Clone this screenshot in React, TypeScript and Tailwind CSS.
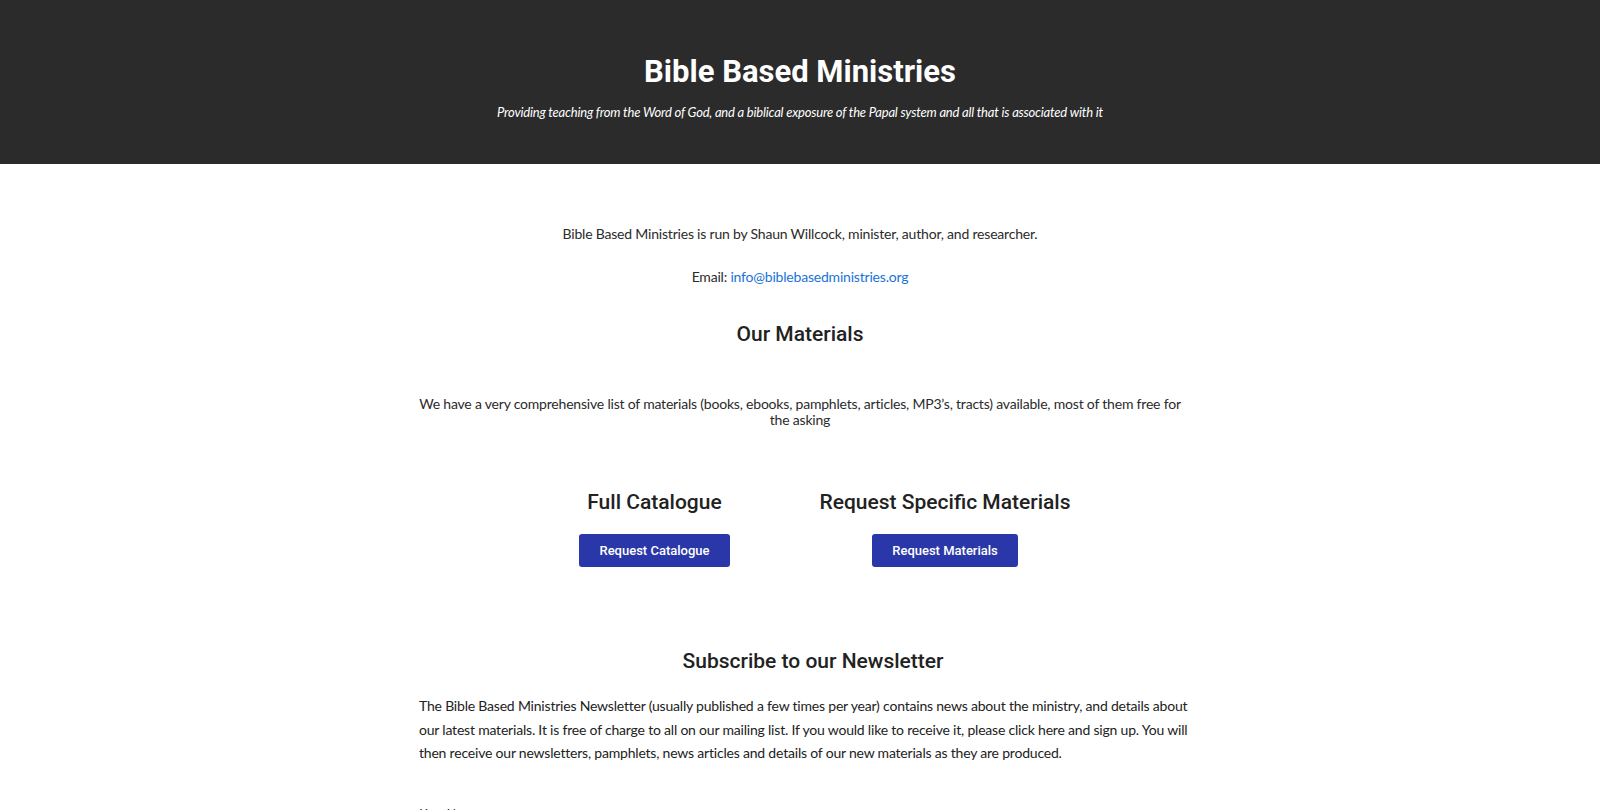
import React from 'react';

export default function App() {
  return (
    <div className="min-h-[810px] bg-white font-['Lato','Liberation_Sans',sans-serif] text-[#2b2b2b]">
      {/* Header */}
      <header className="h-[164px] bg-[#2b2b2b] flex flex-col items-center pt-[52px]">
        <h1 className="font-['Roboto',sans-serif] font-bold text-[31px] leading-[40px] text-white">
          Bible Based Ministries
        </h1>
        <p className="mt-[11px] italic text-[13px] tracking-[-0.2px] leading-[18px] text-white">
          Providing teaching from the Word of God, and a biblical exposure of the Papal system and all that is associated with it
        </p>
      </header>

      <main className="w-[772px] mx-auto flex flex-col items-center">
        <p className="mt-[60px] text-[14px] tracking-[-0.2px] leading-[20px] text-center">
          Bible Based Ministries is run by Shaun Willcock, minister, author, and researcher.
        </p>
        <p className="mt-[23px] text-[14px] tracking-[-0.2px] leading-[20px] text-center">
          Email: <a href="#" className="text-[#1a73d9]">info@biblebasedministries.org</a>
        </p>

        <h2 className="mt-[33px] font-['Roboto',sans-serif] font-medium text-[21px] leading-[28px] text-[#222]">
          Our Materials
        </h2>

        <p className="mt-[48px] w-[764px] text-[14px] tracking-[-0.2px] leading-[16px] text-center">
          We have a very comprehensive list of materials (books, ebooks, pamphlets, articles, MP3’s, tracts) available, most of them free for the asking
        </p>

        <div className="mt-[60px] flex gap-[90px] pl-[50px]">
          <div className="flex flex-col items-center">
            <h3 className="font-['Roboto',sans-serif] font-medium text-[21px] leading-[28px] text-[#222]">Full Catalogue</h3>
            <button className="mt-[18px] h-[33px] px-[20px] rounded-[3px] bg-[#2a37a8] text-white font-['Roboto',sans-serif] font-medium text-[13px]">
              Request Catalogue
            </button>
          </div>
          <div className="flex flex-col items-center">
            <h3 className="font-['Roboto',sans-serif] font-medium text-[21px] leading-[28px] text-[#222]">Request Specific Materials</h3>
            <button className="mt-[18px] h-[33px] px-[20px] rounded-[3px] bg-[#2a37a8] text-white font-['Roboto',sans-serif] font-medium text-[13px]">
              Request Materials
            </button>
          </div>
        </div>

        <h2 className="mt-[80px] pl-[26px] font-['Roboto',sans-serif] font-medium text-[21px] leading-[28px] text-[#222]">
          Subscribe to our Newsletter
        </h2>

        <p className="mt-[19px] self-start ml-[5px] w-[772px] text-[14px] tracking-[-0.2px] leading-[23.5px] text-[#222]">
          The Bible Based Ministries Newsletter (usually published a few times per year) contains news about the ministry, and details about our latest materials. It is free of charge to all on our mailing list. If you would like to receive it, please click here and sign up. You will then receive our newsletters, pamphlets, news articles and details of our new materials as they are produced.
        </p>

        <label className="mt-[40px] self-start ml-[6px] text-[12px] leading-[16px] text-[#222]">Your Name</label>
      </main>
    </div>
  );
}
